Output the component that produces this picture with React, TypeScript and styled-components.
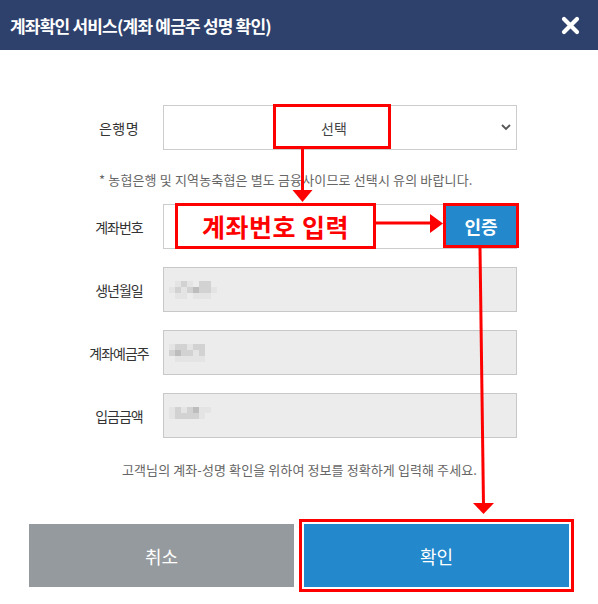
import React from "react";
import styled, { createGlobalStyle } from "styled-components";

const Global = createGlobalStyle`
  html, body { margin: 0; padding: 0; background: #fff; }
  body { font-family: "Noto Sans CJK KR", "Noto Sans", sans-serif; }
  * { box-sizing: border-box; }
`;

const RED = "#ff0000";
const BLUE = "#2388cc";

const Modal = styled.div`
  position: relative;
  width: 598px;
  height: 604px;
  background: #fff;
  overflow: hidden;
`;

const Header = styled.header`
  height: 50px;
  background: #2e416c;
  display: flex;
  align-items: center;
  justify-content: space-between;
  padding: 0 18px 0 10px;
`;

const Title = styled.h1`
  margin: 0;
  color: #fff;
  font-size: 17px;
  font-weight: 700;
  letter-spacing: -0.8px;
`;

const CloseButton = styled.button`
  border: 0;
  background: transparent;
  padding: 0;
  width: 20px;
  height: 20px;
  display: flex;
  align-items: center;
  justify-content: center;
`;

const Body = styled.div`
  padding-top: 55px;
`;

const Row = styled.div<{ $gap?: number }>`
  display: grid;
  grid-template-columns: 88px 354px;
  align-items: center;
  margin-left: 75px;
  margin-top: ${(p) => p.$gap ?? 0}px;
`;

const Label = styled.label<{ $wide?: boolean }>`
  text-align: center;
  font-size: 14px;
  color: #333;
  letter-spacing: ${(p) => (p.$wide ? "0.5px" : "-1px")};
`;

const SelectWrap = styled.div`
  position: relative;
  height: 45px;
`;

const Select = styled.select`
  appearance: none;
  width: 100%;
  height: 45px;
  border: 1px solid #cccccc;
  background: #fff;
  font-family: inherit;
  font-size: 14px;
  color: #444;
  text-align: center;
  text-align-last: center;
  padding: 0 12px 0 0;
  outline: none;
`;

const Chevron = styled.span`
  position: absolute;
  right: 5px;
  top: 18px;
  width: 12px;
  height: 8px;
  display: flex;
  pointer-events: none;
`;

const MarkBox = styled.div`
  position: absolute;
  left: 110px;
  top: -1px;
  width: 118px;
  height: 45px;
  border: 3px solid ${RED};
  pointer-events: none;
`;

const Notice = styled.p`
  margin: 20px 0 0 99px;
  font-size: 13px;
  line-height: 20px;
  color: #666;
  letter-spacing: 0.15px;
`;

const Field = styled.div<{ $readOnly?: boolean }>`
  height: 45px;
  border: 1px solid ${(p) => (p.$readOnly ? "#c8c8c8" : "#cccccc")};
  background: ${(p) => (p.$readOnly ? "#ececec" : "#fff")};
  display: flex;
  align-items: center;
  padding-left: ${(p) => (p.$readOnly ? 5 : 11)}px;
`;

const InputCallout = styled.div`
  align-self: stretch;
  margin: -2px 0 -1px 0;
  width: 201px;
  border: 3px solid ${RED};
  background: #fff;
  display: flex;
  align-items: center;
  justify-content: center;
  color: ${RED};
  font-size: 25px;
  font-weight: 700;
  letter-spacing: 0.5px;
`;

const VerifyButton = styled.button`
  margin: -2px -3px 0 auto;
  align-self: flex-start;
  width: 76px;
  height: 45px;
  border: 3px solid ${RED};
  background: ${BLUE};
  color: #fff;
  font-family: inherit;
  font-size: 18px;
  font-weight: 700;
  padding: 0;
`;

const Guide = styled.p`
  margin: 22px 0 0;
  text-align: center;
  font-size: 13px;
  line-height: 20px;
  color: #666;
  letter-spacing: 0.1px;
  padding-left: 1px;
`;

const Actions = styled.div`
  margin-top: 44px;
  padding: 0 29px;
  display: grid;
  grid-template-columns: 265px 265px;
  gap: 10px;
`;

const ActionButton = styled.button<{ $primary?: boolean; $marked?: boolean }>`
  height: 63px;
  border: 0;
  background: ${(p) => (p.$primary ? BLUE : "#959a9e")};
  color: #fff;
  font-family: inherit;
  font-size: 18px;
  box-shadow: ${(p) => (p.$marked ? `0 0 0 2px #fff, 0 0 0 5px ${RED}` : "none")};
`;

const Overlay = styled.svg`
  position: absolute;
  inset: 0;
  pointer-events: none;
`;

const Masked: React.FC<{ cells: string[] }> = ({ cells }) => (
  <svg width="48" height="18" viewBox="0 0 48 18" style={{ display: "block", filter: "blur(0.6px)" }}>
    {cells.map((c, i) => {
      const col = i % 8;
      const row = Math.floor(i / 8);
      return <rect key={i} x={col * 6} y={row * 6} width="6" height="6" fill={c} />;
    })}
  </svg>
);

const light = "#e4e4e4";
const mid = "#d2d2d2";
const dark = "#bdbdbd";
const bg = "#ececec";

const birth = [
  bg, light, mid, light, bg, mid, mid, bg,
  light, mid, light, mid, dark, mid, mid, light,
  bg, light, light, bg, light, light, light, bg,
];
const owner = [
  light, mid, mid, light, mid, mid, bg, bg,
  mid, dark, mid, mid, light, mid, bg, bg,
  bg, light, light, light, light, light, bg, bg,
];
const amount = [
  light, mid, light, mid, dark, light, light, bg,
  light, mid, mid, mid, mid, light, bg, bg,
  bg, bg, bg, bg, bg, bg, bg, bg,
];

export default function App() {
  return (
    <>
      <Global />
      <Modal>
        <Header>
          <Title>계좌확인 서비스(계좌 예금주 성명 확인)</Title>
          <CloseButton aria-label="닫기">
            <svg width="19" height="19" viewBox="0 0 19 19">
              <path d="M3 3 L16 16 M16 3 L3 16" stroke="#fff" strokeWidth="4.2" strokeLinecap="round" />
            </svg>
          </CloseButton>
        </Header>
        <Body>
          <Row>
            <Label $wide>은행명</Label>
            <SelectWrap>
              <Select defaultValue="">
                <option value="">선택</option>
              </Select>
              <Chevron>
                <svg width="12" height="8" viewBox="0 0 12 8">
                  <path d="M2 2 L6 6 L10 2" fill="none" stroke="#555" strokeWidth="1.8" />
                </svg>
              </Chevron>
              <MarkBox />
            </SelectWrap>
          </Row>
          <Notice>* 농협은행 및 지역농축협은 별도 금융사이므로 선택시 유의 바랍니다.</Notice>
          <Row $gap={14}>
            <Label>계좌번호</Label>
            <Field>
              <InputCallout>계좌번호 입력</InputCallout>
              <VerifyButton>인증</VerifyButton>
            </Field>
          </Row>
          <Row $gap={18}>
            <Label>생년월일</Label>
            <Field $readOnly>
              <Masked cells={birth} />
            </Field>
          </Row>
          <Row $gap={18}>
            <Label>계좌예금주</Label>
            <Field $readOnly>
              <Masked cells={owner} />
            </Field>
          </Row>
          <Row $gap={18}>
            <Label>입금금액</Label>
            <Field $readOnly>
              <Masked cells={amount} />
            </Field>
          </Row>
          <Guide>고객님의 계좌-성명 확인을 위하여 정보를 정확하게 입력해 주세요.</Guide>
          <Actions>
            <ActionButton>취소</ActionButton>
            <ActionButton $primary $marked>확인</ActionButton>
          </Actions>
        </Body>
        <Overlay width="598" height="604" viewBox="0 0 598 604">
          <line x1="302.5" y1="148" x2="302.5" y2="192" stroke={RED} strokeWidth="3" />
          <polygon points="292.5,190 312.5,190 302.5,202" fill={RED} />
          <line x1="375" y1="223" x2="432" y2="223" stroke={RED} strokeWidth="3" />
          <polygon points="430,214 430,233 443,223.5" fill={RED} />
          <line x1="480" y1="248" x2="483.5" y2="505" stroke={RED} strokeWidth="3" />
          <polygon points="473,503 494,503 483.5,514" fill={RED} />
        </Overlay>
      </Modal>
    </>
  );
}
